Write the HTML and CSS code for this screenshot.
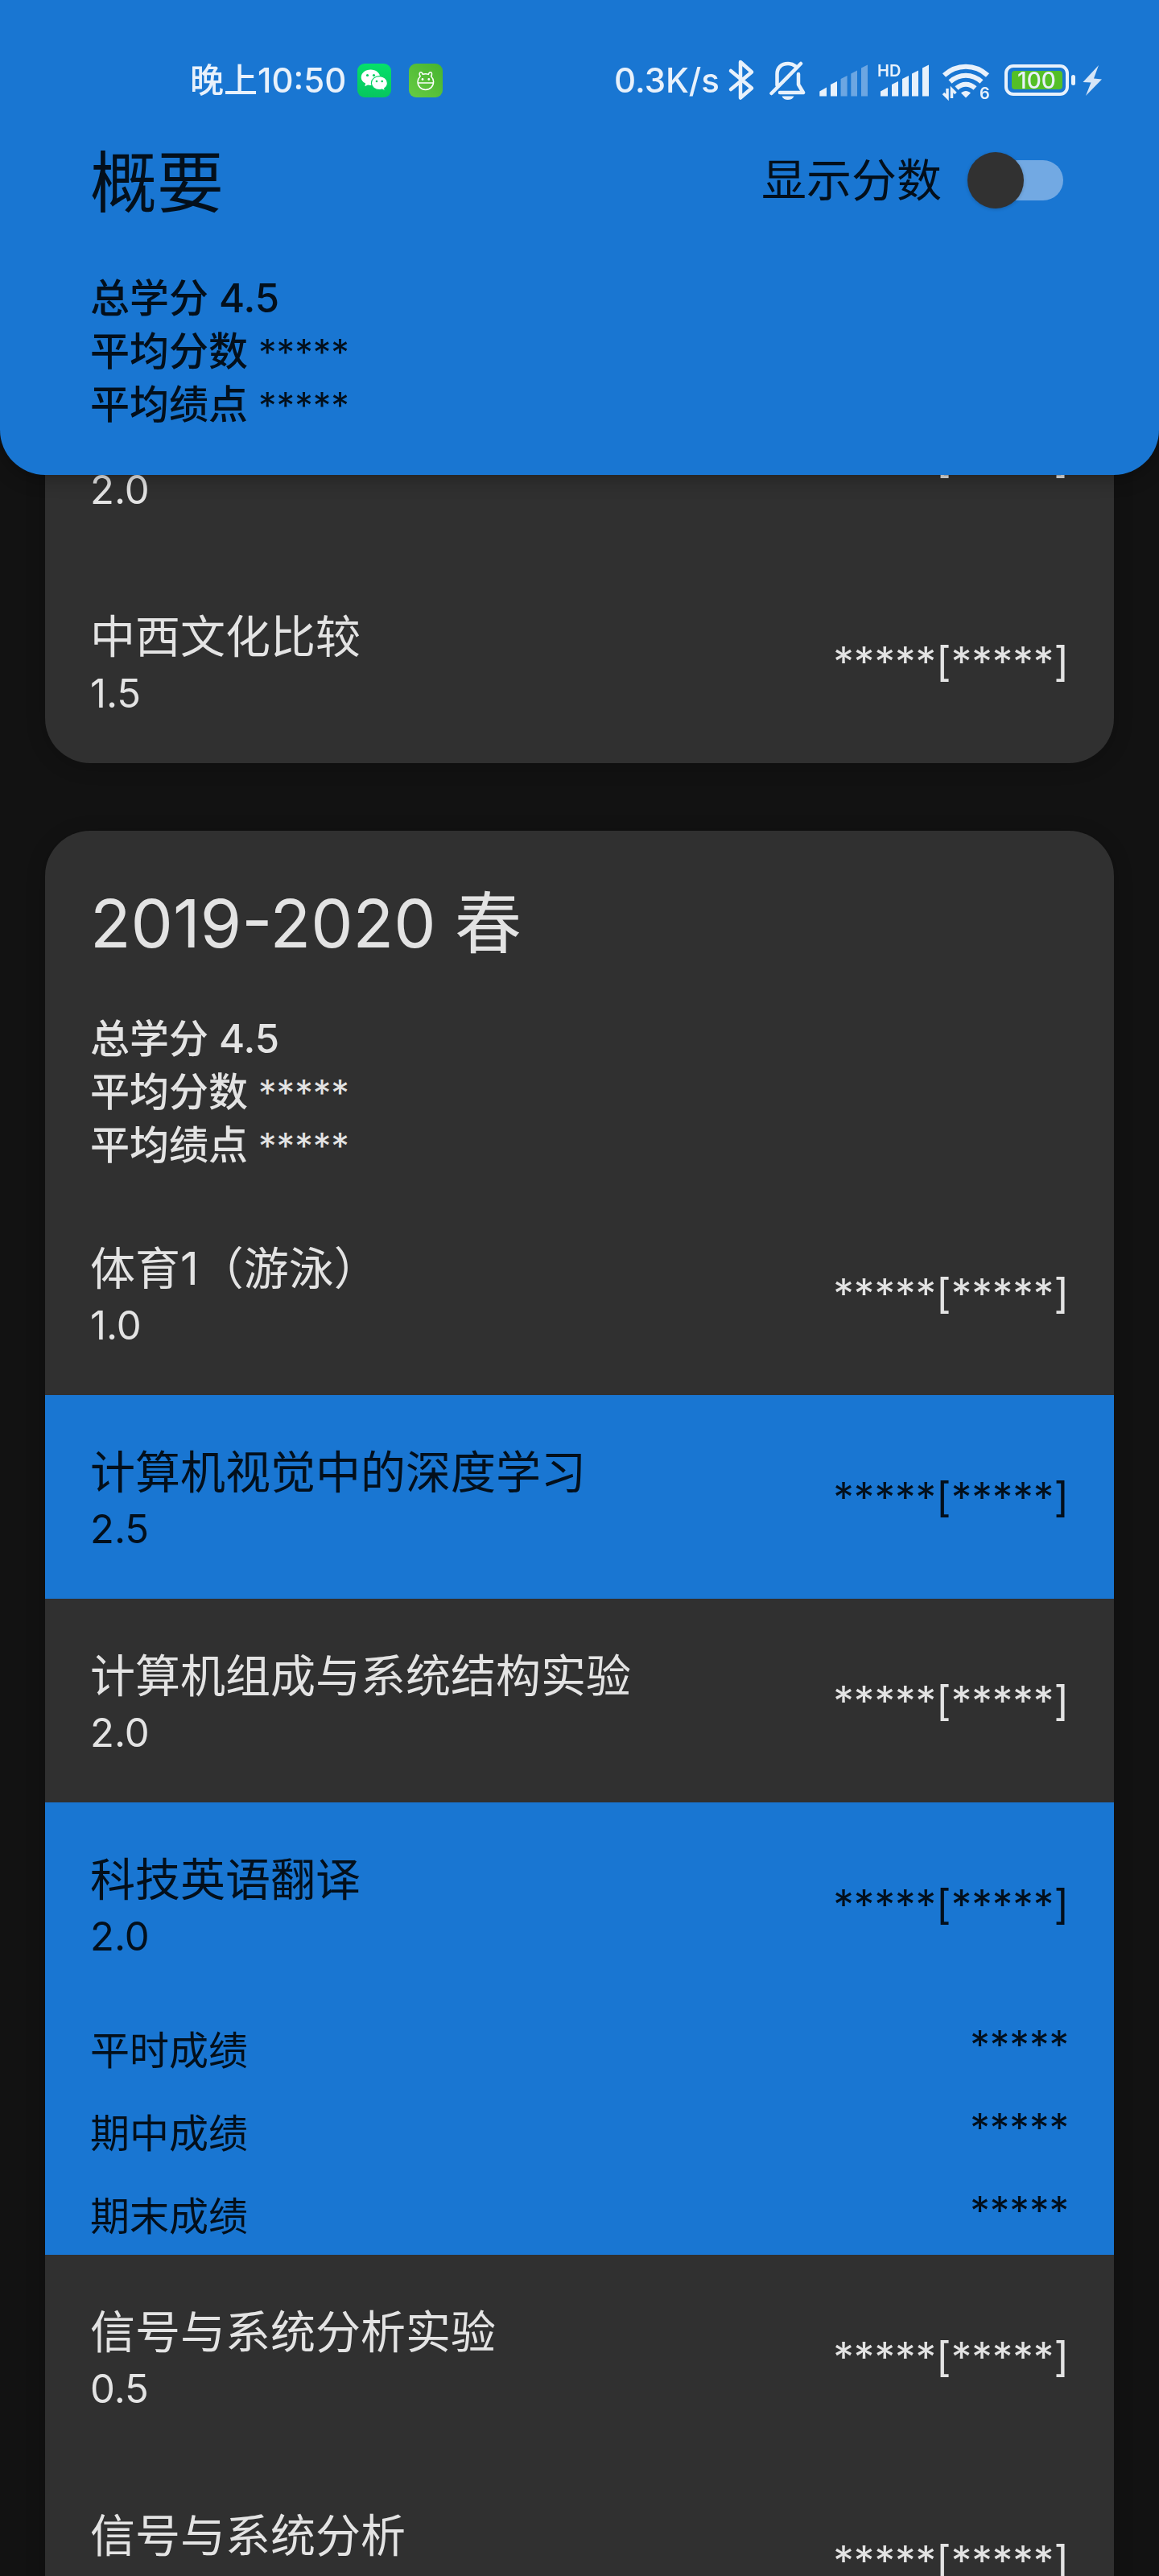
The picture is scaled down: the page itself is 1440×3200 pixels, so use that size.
FILE: index.html
```html
<!DOCTYPE html>
<html lang="zh-CN">
<head>
<meta charset="utf-8">
<meta name="viewport" content="width=device-width, initial-scale=1">
<title>成绩概要</title>
<link rel="stylesheet" href="styles.css">
</head>
<body>
<header class="overview">
  <div class="status-bar">
    <div class="status-group status-left">
      <span class="status-time">晚上10:50</span>
      <svg class="app-icon" viewBox="0 0 42 42" role="img" aria-label="微信">
        <defs><linearGradient id="wx" x1="0" y1="0" x2="0" y2="1"><stop offset="0" stop-color="#05e06a"/><stop offset="1" stop-color="#07c65f"/></linearGradient></defs>
        <rect width="42" height="42" rx="9" fill="url(#wx)"/>
        <path fill="#fff" d="M16.5 7.6c6.6 0 11.8 4.2 11.8 9.6s-5.200 9.700-11.800 9.700c-1.200 0-2.400-.2-3.500-.5L9.300 28.200l.8-3.600C6.800 22.800 4.700 20.200 4.700 17.200c0-5.400 5.200-9.600 11.800-9.600z"/>
        <path fill="#fff" stroke="#06d264" stroke-width="1.200" d="M27.400 15.600c5.600 0 10 3.800 10 8.600 0 2.700-1.400 5-3.700 6.600l.7 3-3.600-1.600c-1.100.3-2.200.5-3.400.5-5.600 0-10-3.800-10-8.500s4.400-8.600 10-8.600z"/>
        <g fill="#06cf63"><circle cx="12.500" cy="14.500" r="1.600"/><circle cx="20.500" cy="14.500" r="1.600"/><circle cx="24" cy="22" r="1.300"/><circle cx="30.700" cy="22" r="1.300"/></g>
      </svg>
      <svg class="app-icon" viewBox="0 0 42 42" role="img" aria-label="应用通知">
        <defs><linearGradient id="ap" x1="1" y1="0" x2="0" y2="1"><stop offset="0" stop-color="#46b42f"/><stop offset="1" stop-color="#66cb43"/></linearGradient></defs>
        <rect width="42" height="42" rx="9" fill="url(#ap)"/>
        <g fill="none" stroke="#fff" stroke-width="1.500" stroke-linejoin="round"><path d="M14.200 15.800c-1.700-2.300-1.200-4.800.3-5 1.500-.2 2.500 1 2.700 2.600 2.300-.7 5-.7 7.200 0 .2-1.600 1.300-2.800 2.800-2.600 1.500.2 2 2.700.4 5 2 2 3 4.200 3 6.800 0 5.600-4.200 9.800-9.800 9.800S11 28.200 11 22.600c0-2.600 1.200-4.800 3.200-6.800z"/><path d="M11.200 24h19.200"/></g>
        <g fill="#fff"><circle cx="17" cy="19.500" r="1.400"/><circle cx="24.800" cy="19.500" r="1.400"/></g>
      </svg>
    </div>
    <div class="status-group status-right">
      <span class="net-speed">0.3K/s</span>
      <svg class="glyph" width="44" height="56" viewBox="902 72 44 56" role="img" aria-label="蓝牙"><path class="line" d="M908 88l26 21.500-14 12V77l14 12.500-26 21.500"/></svg>
      <svg class="glyph" width="62" height="56" viewBox="946 72 62 56" role="img" aria-label="静音">
        <path class="line" d="M965.500 106V92c0-8 5.500-13 13.500-13 3.500 0 6.500 1 9 3M958.500 116L995 79M992 92v13l6 10h-29"/>
        <path class="solid" d="M971.500 119.500h15c-1.200 3-4 4.500-7.500 4.500s-6.300-1.500-7.500-4.500z"/>
      </svg>
      <svg class="glyph" width="76" height="56" viewBox="1008 72 76 56" role="img" aria-label="信号">
        <path class="solid" d="M1018.300 113.500l8.700-5v11h-8.700zM1032 105l8-4v18.500h-8z"/>
        <path class="solid dim" d="M1044.600 98l8-4v25.500h-8zM1057.300 91.500l7.700-4v32h-7.700zM1070 84.500l8-4v39h-8z"/>
      </svg>
      <svg class="glyph" width="78" height="56" viewBox="1084 72 78 56" role="img" aria-label="高清信号">
        <text class="mini" x="1090" y="95">HD</text>
        <path class="solid" d="M1094 113.500l9-5v11h-9zM1108 105l8-4v18.500h-8zM1121 98l8-4v25.500h-8zM1133 91.500l8-4v32h-8zM1146 84.500l8-4v39h-8z"/>
      </svg>
      <svg class="glyph" width="76" height="56" viewBox="1162 72 76 56" role="img" aria-label="无线网络">
        <path class="wave" d="M1173 93.500c15.500-14.500 38.500-14.500 54 0M1180.500 101.500c11.500-10.500 27.500-10.500 39 0M1188.500 109.500c7-6.500 16-6.500 23 0"/>
        <path class="solid" d="M1194 115.500c3.500-3.500 8.500-3.500 12 0l-6 6z"/>
        <path class="arrows" d="M1177 110v11l-5-5M1182.500 122v-11l5 5"/>
        <text class="mini" x="1217" y="123">6</text>
      </svg>
      <svg class="glyph" width="102" height="56" viewBox="1238 72 102 56" role="img" aria-label="电量 100">
        <rect class="shell" x="1250" y="82" width="76" height="35" rx="9"/>
        <rect x="1257" y="88" width="63" height="23" rx="4" fill="#54bf27"/>
        <rect class="solid" x="1331" y="93" width="5" height="13" rx="2.500"/>
        <text class="charge" x="1288" y="110" text-anchor="middle">100</text>
      </svg>
      <svg class="glyph" width="34" height="56" viewBox="1340 72 34 56" role="img" aria-label="充电中"><path class="bolt" d="M1365 81l-19.500 21 10 .5-6.500 16.500 20-20.500-10-1z"/></svg>
    </div>
  </div>
  <div class="overview-head">
    <h1 class="title">概要</h1>
    <div class="toggle">
      <label class="toggle-label" for="show-scores">显示分数</label>
      <input class="switch" type="checkbox" role="switch" id="show-scores">
    </div>
  </div>
  <div class="summary">
    <p>总学分 4.5</p>
    <p>平均分数 <span class="mask">*****</span></p>
    <p>平均绩点 <span class="mask">*****</span></p>
  </div>
</header>

<main class="terms">
  <section class="card">
    <article class="course">
      <div><h3 class="course-name">&nbsp;</h3><p class="credit">2.0</p></div>
      <span class="score">*****[*****]</span>
    </article>
    <article class="course">
      <div><h3 class="course-name">中西文化比较</h3><p class="credit">1.5</p></div>
      <span class="score">*****[*****]</span>
    </article>
  </section>

  <section class="card">
    <div class="term-head">
      <h2 class="title">2019-2020 春</h2>
      <div class="summary">
        <p>总学分 4.5</p>
        <p>平均分数 <span class="mask">*****</span></p>
        <p>平均绩点 <span class="mask">*****</span></p>
      </div>
    </div>
    <article class="course">
      <div><h3 class="course-name">体育1（游泳）</h3><p class="credit">1.0</p></div>
      <span class="score">*****[*****]</span>
    </article>
    <article class="course selected">
      <div><h3 class="course-name">计算机视觉中的深度学习</h3><p class="credit">2.5</p></div>
      <span class="score">*****[*****]</span>
    </article>
    <article class="course">
      <div><h3 class="course-name">计算机组成与系统结构实验</h3><p class="credit">2.0</p></div>
      <span class="score">*****[*****]</span>
    </article>
    <article class="course selected">
      <div><h3 class="course-name">科技英语翻译</h3><p class="credit">2.0</p></div>
      <span class="score">*****[*****]</span>
    </article>
    <dl class="breakdown selected">
      <div class="part"><dt>平时成绩</dt><dd class="part-score">*****</dd></div>
      <div class="part"><dt>期中成绩</dt><dd class="part-score">*****</dd></div>
      <div class="part"><dt>期末成绩</dt><dd class="part-score">*****</dd></div>
    </dl>
    <article class="course">
      <div><h3 class="course-name">信号与系统分析实验</h3><p class="credit">0.5</p></div>
      <span class="score">*****[*****]</span>
    </article>
    <article class="course">
      <div><h3 class="course-name">信号与系统分析</h3><p class="credit">&nbsp;</p></div>
      <span class="score">*****[*****]</span>
    </article>
  </section>
</main>
</body>
</html>
```
FILE: styles.css
```css
:root {
  --blue: #1976d2;
  --surface: #303030;
  --on-blue: #030f1b;
  --on-dark: #e3e3e3;
  --status: #e8f1fb;
}

* { box-sizing: border-box; }

body {
  margin: 0;
  height: 100vh;
  overflow: hidden;
  background: #121212;
  color: var(--on-dark);
  font-family: Inter, "Noto Sans CJK SC", sans-serif;
}

h1, h2, h3, p, dl, dd { margin: 0; font-weight: 400; }

/* Pinned overview panel */
.overview {
  position: sticky;
  top: 0;
  z-index: 1;
  padding: 72px 112px 54px;
  border-radius: 0 0 56px 56px;
  background: var(--blue);
  color: var(--on-blue);
  box-shadow: 0 4px 24px rgba(0, 0, 0, .3);
}

.status-bar {
  display: flex;
  justify-content: space-between;
  height: 56px;
  margin: 0 -46px 40px 124px;
  color: var(--status);
  font-size: 42px;
  font-weight: 500;
  line-height: 56px;
  white-space: nowrap;
}

.status-group { display: flex; align-items: center; }
.status-left { gap: 22px; }
.status-time { margin-right: -8px; }
.app-icon { width: 42px; height: 42px; }
.net-speed { margin-right: 8px; }

.glyph { flex: none; fill: none; }
.line { stroke: var(--status); stroke-width: 4.5; stroke-linecap: round; stroke-linejoin: round; }
.wave { stroke: var(--status); stroke-width: 6; }
.arrows { stroke: var(--status); stroke-width: 3.5; }
.shell { stroke: var(--status); stroke-width: 4; }
.solid { fill: var(--status); }
.dim { opacity: .4; }
.bolt { fill: #d5e5f7; }
.mini { fill: var(--status); font-size: 20px; font-weight: 600; }
.charge { fill: var(--status); font-size: 28px; font-weight: 500; }

.overview-head {
  display: flex;
  align-items: center;
  justify-content: space-between;
  margin-bottom: 52px;
}

.title { font-size: 83px; line-height: 118px; margin-bottom: 52px; }
.overview-head .title { margin-bottom: 0; }

.toggle {
  display: flex;
  align-items: center;
  gap: 32px;
  padding-bottom: 6px;
}
.toggle-label { font-size: 56px; line-height: 76px; }

.switch {
  appearance: none;
  position: relative;
  width: 126px;
  height: 70px;
  margin: 0;
}
.switch::before {
  content: "";
  position: absolute;
  inset: 10px 7px;
  border-radius: 25px;
  background: #72a9e3;
}
.switch::after {
  content: "";
  position: absolute;
  top: 0;
  left: 0;
  width: 70px;
  height: 70px;
  border-radius: 50%;
  background: #313131;
  box-shadow: 0 1px 4px rgba(0, 0, 0, .2);
}
.switch:checked::after { left: auto; right: 0; }

.summary { font-size: 49px; line-height: 66px; }
.summary p { font-weight: 500; }
.mask { font-size: 45px; font-weight: 400; line-height: 1; }

.terms { margin-top: -148px; padding: 0 56px; }

.card {
  margin-bottom: 84px;
  border-radius: 56px;
  background: var(--surface);
  box-shadow: 0 4px 24px rgba(0, 0, 0, .2);
}

.term-head { padding: 56px 56px 24px; }

.course {
  display: flex;
  align-items: center;
  justify-content: space-between;
  padding: 56px;
}
.course-name { font-size: 56px; line-height: 80px; }
.credit { font-size: 49px; line-height: 61px; }
.score { font-size: 51px; line-height: 65px; }

.selected { background: var(--blue); color: var(--on-blue); }

.part {
  display: flex;
  align-items: center;
  justify-content: space-between;
  height: 103px;
  padding: 0 56px;
  font-size: 49px;
}
.part-score { padding-bottom: 6px; }
```
